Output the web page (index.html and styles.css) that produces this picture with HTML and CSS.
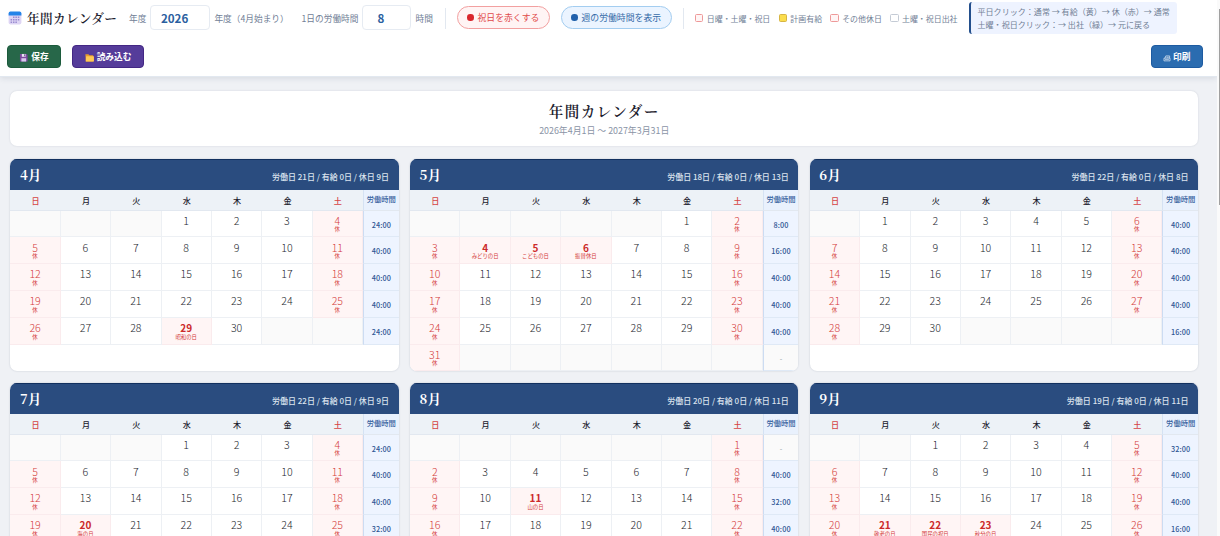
FILE: index.html
```html
<!DOCTYPE html>
<html lang="ja">
<head>
<meta charset="utf-8">
<title>年間カレンダー</title>
<link rel="stylesheet" href="styles.css">
</head>
<body>
<header class="toolbar">
  <div class="toolbar-row">
    <div class="brand">
      <svg class="brand-icon" viewBox="0 0 14 14"><rect x=".6" y="1" width="12.8" height="12.4" rx="1.8" fill="#ded5f4"/><path d="M.6 4.4V2.6Q.6.6 2.4.6h9.2q1.8 0 1.8 2v1.8z" fill="#2584e8"/><g fill="#998bd0"><path d="M5 5.6h1.5v1.5H5zM7.4 5.6h1.5v1.5H7.4zM9.8 5.6h1.5v1.5H9.8zM2.6 8h1.5v1.5H2.6zM5 8h1.5v1.5H5zM7.4 8h1.5v1.5H7.4zM9.8 8h1.5v1.5H9.8zM2.6 10.4h1.5v1.5H2.6zM5 10.4h1.5v1.5H5zM7.4 10.4h1.5v1.5H7.4z"/></g></svg>
      <span class="brand-name">年間カレンダー</span>
    </div>
    <label class="field year"><span>年度</span><span class="input">2026</span><span>年度（4月始まり）</span></label>
    <label class="field hours"><span>1日の労働時間</span><span class="input">8</span><span>時間</span></label>
    <i class="divider"></i>
    <span class="pill pill-red"><i></i>祝日を赤くする</span>
    <span class="pill pill-blue"><i></i>週の労働時間を表示</span>
    <i class="divider"></i>
    <div class="legend">
      <span><i class="sw red"></i>日曜・土曜・祝日</span>
      <span><i class="sw yellow"></i>計画有給</span>
      <span><i class="sw red"></i>その他休日</span>
      <span><i class="sw"></i>土曜・祝日出社</span>
    </div>
    <div class="hint">平日クリック：通常 → 有給（黄）→ 休（赤）→ 通常<br>土曜・祝日クリック：→ 出社（緑）→ 元に戻る</div>
  </div>
  <div class="toolbar-row actions">
    <span class="btn save"><svg viewBox="0 0 10 10"><path d="M1 1h7l1 1v7H1z" fill="#7b4a9e"/><path d="M3 1h4v3H3z" fill="#e9e4f5"/><path d="M2.5 5.5h5V9h-5z" fill="#d9c9ee"/><path d="M5.6 1.4h.9v2h-.9z" fill="#503070"/></svg>保存</span>
    <span class="btn load"><svg viewBox="0 0 10 10"><path d="M.4 1.2h3.2l1 1.1h4V9H.8z" fill="#e69b2c"/><path d="M1.2 3.3h8.2V9H.8z" fill="#ffc956"/></svg>読み込む</span>
    <span class="btn print"><svg viewBox="0 0 10 10" fill="none" stroke="#fff" stroke-width=".75"><path d="M1.2 5.2h7.6v3.4H1.2zM2.5 5.2l1-2.8h4.8v2.8M4.5 4h2.6M2.4 7h5"/></svg>印刷</span>
  </div>
</header>
<main class="page">
  <section class="cover">
    <h1>年間カレンダー</h1>
    <p>2026年4月1日 〜 2027年3月31日</p>
  </section>
  <section class="months" id="months"></section>
</main>
<div class="scrollbar"><i></i></div>
<script src="calendar.js"></script>
</body>
</html>
```

FILE: styles.css
```css
* { box-sizing: border-box; }
html, body { height: 100%; overflow: hidden; }
body {
  margin: 0;
  padding-right: 3px;
  position: relative;
  background: #eff1f5;
  color: #1a202c;
  font-family: "Noto Sans CJK JP", sans-serif;
  font-size: 8.7px;
}
i { font-style: normal; display: block; flex: none; }
.toolbar {
  height: 77px;
  background: #fff;
  border-bottom: 1px solid #e2e8f0;
  box-shadow: 0 1px 6px rgba(30, 45, 75, .13);
  padding: 2px 14.5px 0 7px;
  position: relative;
}
.toolbar-row { display: flex; align-items: center; height: 32px; white-space: nowrap; }
.brand { display: flex; align-items: center; gap: 5px; width: 122px; flex: none; }
.brand-icon { width: 14px; height: 14px; margin-left: 1px; }
.brand-name {
  font-family: "Noto Serif CJK JP", "Noto Serif JP", "Liberation Serif", "Noto Sans CJK JP", serif;
  font-size: 12.6px;
  font-weight: 600;
  letter-spacing: .4px;
  margin-top: -2px;
}
.field { display: flex; align-items: center; gap: 4px; color: #718096; flex: none; }
.field.year { width: 172.5px; }
.field.hours { width: 143.5px; }
.input {
  height: 25.5px;
  border: 1px solid #e6ebf2;
  border-radius: 4px;
  color: #2b5fa0;
  font-size: 11.6px;
  font-weight: 700;
  line-height: 24px;
  margin-top: -1px;
}
.year .input { width: 60px; padding-left: 9.5px; }
.hours .input { width: 49px; padding-left: 14px; }
.divider { width: 1px; height: 21px; background: #e2e8f0; }
.pill {
  display: flex;
  align-items: center;
  gap: 4px;
  height: 23.5px;
  border: 1px solid;
  border-radius: 12px;
  padding: 0 10px 0 9px;
  margin-left: 11px;
  margin-top: -1px;
  font-size: 8.85px;
  flex: none;
}
.pill i { width: 6.5px; height: 6.5px; border-radius: 50%; }
.pill-red { color: #df4a4a; background: #fff4f4; border-color: #f2a0a0; width: 93px; }
.pill-red i { background: #d9262c; }
.pill-blue { color: #356ba8; background: #ebf4ff; border-color: #a3cdf0; width: 111px; margin-right: 11px; }
.pill-blue i { background: #2161ab; }
.legend { display: flex; gap: 8.3px; margin-left: 11px; font-size: 7.95px; color: #718096; }
.legend span { display: flex; align-items: center; gap: 3.4px; }
.sw { width: 8.4px; height: 8.6px; border: 1px solid #c4cbd5; border-radius: 1.5px; background: #fff; }
.sw.red { border-color: #ee9999; background: #fff5f5; }
.sw.yellow { border-color: #d6b544; background: #fbdd4d; }
.hint {
  width: 208px;
  height: 32px;
  margin-left: 11px;
  padding: 3px 0 0 7px;
  border-left: 2px solid #234f8c;
  border-radius: 3px;
  background: #eef3ff;
  color: #718096;
  font-size: 8.05px;
  line-height: 13px;
  flex: none;
}
.actions { margin-top: 6.5px; gap: 11px; }
.btn {
  display: flex;
  align-items: center;
  justify-content: center;
  gap: 2.5px;
  height: 22.5px;
  border-radius: 4px;
  color: #fff;
  font-weight: 700;
}
.btn svg { width: 9.5px; height: 9.5px; margin-top: 2px; }
.save { width: 54px; background: #276749; border: 1px solid #1c5b3c; }
.load { width: 72px; background: #553c9a; border: 1px solid #432784; }
.print { width: 52px; background: #2b6cb0; border: 1px solid #1d5ba1; margin-left: auto; }
.print svg { width: 8px; height: 8px; }

.page { padding: 14px 19px 0 10.4px; }
.cover {
  height: 55px;
  background: #fff;
  border-radius: 7px;
  box-shadow: 0 0 2px rgba(30, 45, 75, .16);
  text-align: center;
  padding-top: 9px;
}
.cover h1 {
  margin: 0;
  font-family: "Noto Serif CJK JP", "Noto Serif JP", "Liberation Serif", "Noto Sans CJK JP", serif;
  font-size: 14.5px;
  font-weight: 600;
  letter-spacing: 1.5px;
  line-height: 22px;
}
.cover p { margin: 2px 0 0; font-size: 8.9px; line-height: 13px; color: #8a94a6; }
.months {
  display: grid;
  grid-template-columns: repeat(3, 1fr);
  grid-auto-rows: 212.4px;
  gap: 11.5px;
  margin-top: 12.8px;
}
.month {
  background: #fff;
  border-radius: 7px;
  box-shadow: 0 0 2px rgba(30, 45, 75, .2);
  overflow: hidden;
}
.month-head {
  display: flex;
  align-items: center;
  justify-content: space-between;
  height: 31.4px;
  padding: 0 9.5px;
  background: #2a4c7f;
  border-top: 1px solid #12305f;
  color: #fff;
}
.month-name {
  font-family: "Noto Serif CJK JP", "Noto Serif JP", "Liberation Serif", "Noto Sans CJK JP", serif;
  font-size: 13.2px;
  font-weight: 700;
  letter-spacing: .4px;
}
.stats { font-size: 8px; font-weight: 500; color: #dbe3ee; padding-top: 4px; }
.days {
  display: grid;
  grid-template-columns: repeat(7, 1fr) 35.6px;
  grid-template-rows: 20.5px;
  grid-auto-rows: 26.8px;
}
.wd {
  background: #edf2f7;
  border-bottom: 1px solid #e2e8f0;
  text-align: center;
  font-size: 8.1px;
  font-weight: 500;
  line-height: 21.5px;
}
.wd.off { color: #d64545; }
.wd.total {
  background: #e9f1fd;
  border-left: 1px solid #d5e2f3;
  color: #3a639f;
  font-size: 7.3px;
  font-weight: 500;
  line-height: 19px;
  white-space: nowrap;
}
.day {
  border-right: 1px solid #edf0f4;
  border-bottom: 1px solid #edf0f4;
  text-align: center;
  padding-top: 3.2px;
  font-size: 10.6px;
  line-height: 13px;
  font-weight: 300;
  color: #23272e;
  white-space: nowrap;
  overflow: hidden;
}
.day small { display: block; margin-top: .5px; font-size: 5.4px; line-height: 5px; font-weight: 400; }
.day.blank { background: #fafafa; }
.day.off { background: #fff5f5; color: #d43c3c; border-color: #faebed; }
.day.holiday b { color: #cc2a2a; font-weight: 700; font-size: 10px; }
.day.holiday small { font-weight: 400; }
.sum {
  background: #eef4ff;
  border-left: 1px solid #ccdcf2;
  border-bottom: 1px solid #dfe9f6;
  color: #2f5694;
  text-align: center;
  font-size: 7.3px;
  letter-spacing: .1px;
  font-weight: 500;
  line-height: 29px;
}
.sum.none { background: #fafafa; color: #8f98a6; font-weight: 400; }
.scrollbar { position: absolute; top: 0; right: 0; width: 3px; height: 536px; background: #fafafa; }
.scrollbar i { width: 1px; height: 196px; margin: 9px 0 0 2px; background: #a0a0a0; }
```

FILE: calendar.js
```js
const HOLIDAYS = {
  '4-29': '昭和の日', '5-4': 'みどりの日', '5-5': 'こどもの日', '5-6': '振替休日',
  '7-20': '海の日', '8-11': '山の日', '9-21': '敬老の日', '9-22': '国民の祝日', '9-23': '秋分の日'
};
const WEEKDAYS = ['日', '月', '火', '水', '木', '金', '土'];
const HOURS_PER_DAY = 8;

function renderMonth(year, month) {
  const first = new Date(year, month - 1, 1).getDay();
  const count = new Date(year, month, 0).getDate();
  const weeks = Math.ceil((first + count) / 7);
  let work = 0;
  let cells = WEEKDAYS.map((d, i) => `<div class="wd${i % 6 ? '' : ' off'}">${d}</div>`).join('');
  cells += '<div class="wd total">労働時間</div>';
  for (let w = 0; w < weeks; w++) {
    let worked = 0;
    for (let i = 0; i < 7; i++) {
      const day = w * 7 + i - first + 1;
      if (day < 1 || day > count) {
        cells += '<div class="day blank"></div>';
        continue;
      }
      const holiday = HOLIDAYS[month + '-' + day];
      if (holiday) {
        cells += `<div class="day off holiday"><b>${day}</b><small>${holiday}</small></div>`;
      } else if (i % 6 === 0) {
        cells += `<div class="day off">${day}<small>休</small></div>`;
      } else {
        worked++;
        cells += `<div class="day">${day}</div>`;
      }
    }
    work += worked;
    cells += worked
      ? `<div class="sum">${worked * HOURS_PER_DAY}:00</div>`
      : '<div class="sum none">-</div>';
  }
  return `<article class="month"><div class="month-head"><span class="month-name">${month}月</span>` +
    `<span class="stats">労働日 ${work}日 / 有給 0日 / 休日 ${count - work}日</span></div>` +
    `<div class="days">${cells}</div></article>`;
}

document.getElementById('months').innerHTML =
  [4, 5, 6, 7, 8, 9].map(m => renderMonth(2026, m)).join('');
```
